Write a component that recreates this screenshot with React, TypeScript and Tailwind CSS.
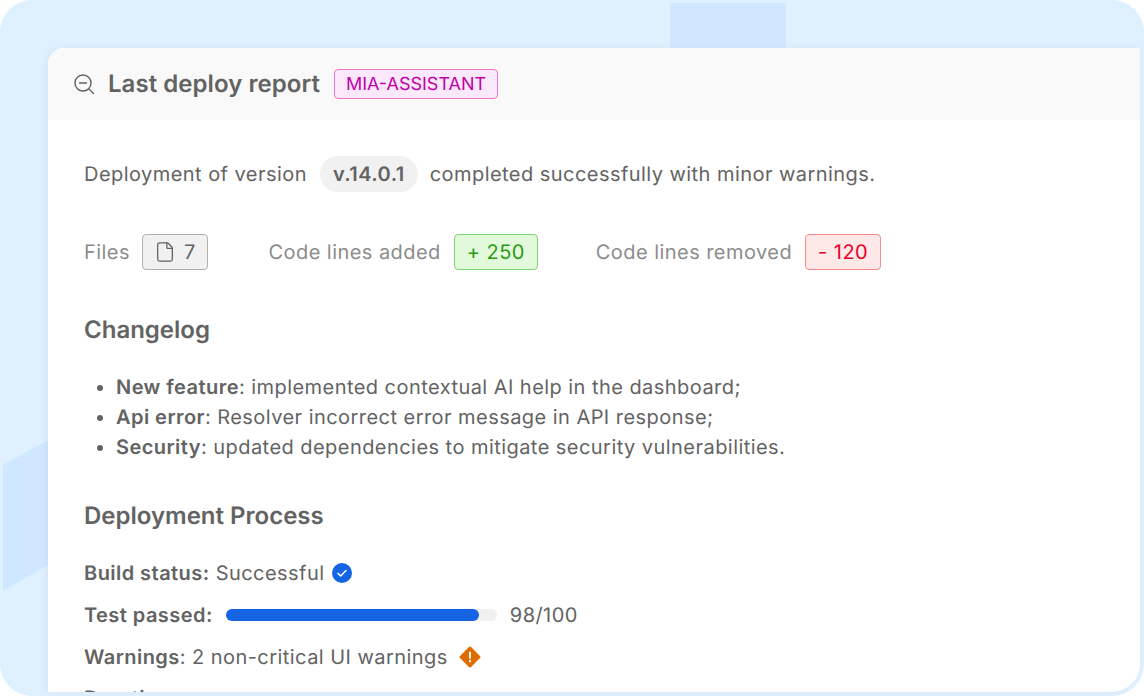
import { File } from 'lucide-react'

const Stat = ({ label, gap, children }: { label: string; gap: string; children: React.ReactNode }) => (
  <div className={`flex items-center ${gap}`}>
    <span className="text-[#8c8c8c]">{label}</span>
    {children}
  </div>
)

export default function App() {
  return (
    <div className="h-[696px] w-[1144px] overflow-hidden bg-white font-['Inter',sans-serif] text-[20px] leading-[30px] tracking-[0.45px] text-[#636363] [text-rendering:geometricPrecision]">
      <div className="relative h-full overflow-hidden rounded-[32px] bg-[#dff0ff] pr-1 pb-1 pl-12 pt-12">
        <div className="absolute left-[670px] top-[3px] h-[45px] w-[116px] bg-[#d0e8ff]" />
        <svg className="absolute left-[3px] top-[440px]" width="45" height="151" viewBox="0 0 45 151">
          <path d="M0 25 L45 0 V125 L0 151 Z" fill="#d0e8ff" />
        </svg>

        <main className="relative h-[644px] overflow-hidden rounded-tl-[16px] rounded-br-[28px] bg-white shadow-[-2px_0_6px_rgba(20,80,140,0.06)]">
          <header className="flex h-[72px] items-center bg-[#f9f9f9] pl-[25px]">
            <svg width="22" height="22" viewBox="0 0 22 22" fill="none" stroke="#636363" strokeWidth="1.4" strokeLinecap="round">
              <circle cx="10" cy="10" r="8" />
              <path d="M6.5 10h7M16 16l4.5 4.5" />
            </svg>
            <h1 className="ml-[13px] text-[24px] font-semibold tracking-[0.05px]">Last deploy report</h1>
            <span className="ml-[14px] flex h-[30px] items-center rounded-[4px] border border-[#e878d8] bg-[#fbe8fa] px-[11px] text-[18px] tracking-normal text-[#c000a8]">
              <span className="translate-y-px">MIA-ASSISTANT</span>
            </span>
          </header>

          <div className="px-9 pt-9">
            <p className="flex h-9 items-center">
              Deployment of version
              <span className="ml-[13px] mr-3 flex h-9 items-center rounded-full bg-[#f1f1f1] px-[13px] font-semibold">v.14.0.1</span>
              completed successfully with minor warnings.
            </p>

            <div className="mt-[42px] flex h-9 items-center gap-[58px]">
              <div className="mr-[2.5px]">
                <Stat label="Files" gap="gap-3">
                  <span className="flex h-9 w-[66px] items-center justify-center gap-2 rounded-[4px] border border-[#b0b0b0] bg-[#f1f1f1]">
                    <File size={22} strokeWidth={1.4} />7
                  </span>
                </Stat>
              </div>
              <Stat label="Code lines added" gap="gap-[13px]">
                <span className="flex h-9 w-[84px] items-center justify-center rounded-[4px] border border-[#7ed56f] bg-[#e2f9dc] text-[#2a9a10]">+ 250</span>
              </Stat>
              <Stat label="Code lines removed" gap="gap-[13px]">
                <span className="flex h-9 w-[76px] items-center justify-center rounded-[4px] border border-[#fb8a8a] bg-[#ffe8e8] text-[#e80028]">- 120</span>
              </Stat>
            </div>

            <h2 className="mt-[42px] text-[24px] font-semibold leading-9 tracking-normal">Changelog</h2>
            <ul className="mt-6 list-disc pl-8">
              <li><strong className="font-semibold">New feature</strong>: implemented contextual AI help in the dashboard;</li>
              <li><strong className="font-semibold">Api error</strong>: Resolver incorrect error message in API response;</li>
              <li><strong className="font-semibold">Security</strong>: updated dependencies to mitigate security vulnerabilities.</li>
            </ul>

            <h2 className="mt-[36px] text-[24px] font-semibold leading-9 tracking-normal">Deployment Process</h2>
            <div className="mt-6 flex h-[30px] items-center gap-[7px]">
              <span><strong className="font-semibold">Build status:</strong> Successful</span>
              <svg width="20" height="20" viewBox="0 0 20 20">
                <circle cx="10" cy="10" r="10" fill="#1464e4" />
                <path d="M6 10.4l2.7 2.6L14 7.5" fill="none" stroke="#fff" strokeWidth="1.5" strokeLinecap="round" strokeLinejoin="round" />
              </svg>
            </div>
            <div className="mt-3 flex h-[30px] items-center">
              <strong className="font-semibold">Test passed:</strong>
              <div className="ml-[13px] h-3 w-[271px] rounded-full bg-[#f1f1f1]">
                <div className="h-full w-[253px] rounded-full bg-[#1464e4]" />
              </div>
              <span className="ml-[13px]">98/100</span>
            </div>
            <div className="mt-3 flex h-[30px] items-center gap-[11px]">
              <span><strong className="font-semibold">Warnings</strong>: 2 non-critical UI warnings</span>
              <svg width="22" height="22" viewBox="0 0 22 22">
                <rect x="3.2" y="3.2" width="15.6" height="15.6" rx="1.5" fill="#e06c00" transform="rotate(45 11 11)" />
                <path d="M11 6.5v5.5M11 14.8v.6" stroke="#fff" strokeWidth="1.9" strokeLinecap="round" />
              </svg>
            </div>
            <div className="mt-[11px] font-semibold">Duration</div>
          </div>
        </main>
      </div>
    </div>
  )
}
